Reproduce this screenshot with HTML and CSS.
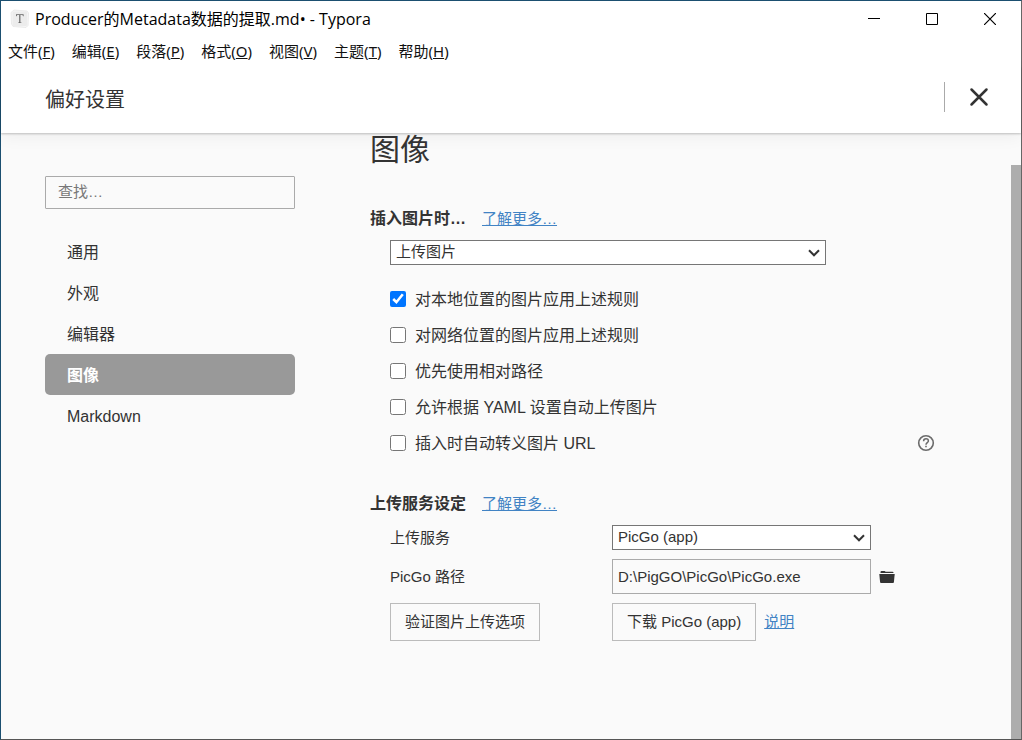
FILE: index.html
```html
<!DOCTYPE html>
<html lang="zh-CN">
<head>
<meta charset="utf-8">
<title>Typora</title>
<link rel="stylesheet" href="styles.css">
</head>
<body>
<div class="window">
  <header class="titlebar">
    <svg class="app-icon" width="20" height="20" viewBox="0 0 20 20" aria-hidden="true">
      <path d="M1 3.500 4 1l13 1 1.500 2-.500 12.500L16 18.500 3 17.500 1.500 15z" fill="#f6f6f6" stroke="#e4e4e4" stroke-width=".7"/>
      <rect x="2.500" y="2.500" width="14.500" height="14.500" rx="1" fill="#ececec"/>
      <path d="M6 7.300V5.300h7.600v2h-.5c-.2-.9-.7-1.200-1.500-1.200h-1.200v6.600c0 .6.300.8 1.100.9v.4H8.100v-.4c.8-.1 1.100-.3 1.100-.9V6.100H8c-.8 0-1.300.3-1.500 1.200z" fill="#666"/>
    </svg>
    <span class="window-title">Producer的Metadata数据的提取.md• - Typora</span>
    <div class="window-buttons">
      <button class="window-button" aria-label="最小化"><svg width="12" height="12" viewBox="0 0 12 12"><path d="M0 5.500h12" stroke="#000"/></svg></button>
      <button class="window-button" aria-label="最大化"><svg width="12" height="12" viewBox="0 0 12 12"><path d="M.5.5h11v11H.5z" fill="none" stroke="#000"/></svg></button>
      <button class="window-button" aria-label="关闭"><svg width="12" height="12" viewBox="0 0 12 12"><path d="m0 0 12 12M12 0 0 12" stroke="#000" stroke-width="1.200"/></svg></button>
    </div>
  </header>
  <nav class="menubar">
    <button class="menu">文件(<u>F</u>)</button>
    <button class="menu">编辑(<u>E</u>)</button>
    <button class="menu">段落(<u>P</u>)</button>
    <button class="menu">格式(<u>O</u>)</button>
    <button class="menu">视图(<u>V</u>)</button>
    <button class="menu">主题(<u>T</u>)</button>
    <button class="menu">帮助(<u>H</u>)</button>
  </nav>
  <div class="panel-header">
    <span class="panel-title">偏好设置</span>
    <button class="panel-close" aria-label="关闭偏好设置"><svg width="20" height="20" viewBox="0 0 20 20"><path d="m2.500 2.500 15 15M17.500 2.500l-15 15" stroke="#333" stroke-width="2.500" stroke-linecap="round"/></svg></button>
  </div>
  <div class="panel-body">
    <aside class="sidebar">
      <input class="search" type="text" placeholder="查找…" aria-label="查找">
      <nav class="sections">
        <a class="section" href="#general">通用</a>
        <a class="section" href="#appearance">外观</a>
        <a class="section" href="#editor">编辑器</a>
        <a class="section section-active" href="#image">图像</a>
        <a class="section" href="#markdown">Markdown</a>
      </nav>
    </aside>
    <main class="content">
      <h1 class="page-title">图像</h1>
      <div class="group-head">
        <h2 class="group-title" id="insert-title">插入图片时…</h2>
        <a class="link" href="#insert-help">了解更多…</a>
      </div>
      <div class="group">
        <div class="select-wrap insert-action">
          <select class="select" aria-labelledby="insert-title"><option>上传图片</option></select>
          <svg class="arrow" width="12" height="8" viewBox="0 0 12 8"><path d="m1 1.300 5 5 5-5" fill="none" stroke="#333" stroke-width="2"/></svg>
        </div>
        <div class="checks">
          <label class="check"><input class="box" type="checkbox" checked><span class="check-text">对本地位置的图片应用上述规则</span></label>
          <label class="check"><input class="box" type="checkbox"><span class="check-text">对网络位置的图片应用上述规则</span></label>
          <label class="check"><input class="box" type="checkbox"><span class="check-text">优先使用相对路径</span></label>
          <label class="check"><input class="box" type="checkbox"><span class="check-text">允许根据 YAML 设置自动上传图片</span></label>
          <div class="check-row">
            <label class="check"><input class="box" type="checkbox"><span class="check-text">插入时自动转义图片 URL</span></label>
            <button class="icon-button" aria-label="帮助">
              <svg width="18" height="18" viewBox="0 0 18 18"><circle cx="9" cy="9" r="7.300" fill="none" stroke="#6b6b6b" stroke-width="1.600"/><path d="M6.600 7.200c0-1.500 1-2.500 2.400-2.500s2.400.9 2.400 2.200c0 1.600-2.400 1.800-2.400 3.800" fill="none" stroke="#6b6b6b" stroke-width="1.500"/><path d="M8.200 11.700h1.600v1.600H8.200z" fill="#6b6b6b"/></svg>
            </button>
          </div>
        </div>
      </div>
      <div class="group-head">
        <h2 class="group-title">上传服务设定</h2>
        <a class="link" href="#upload-help">了解更多…</a>
      </div>
      <div class="group form">
        <label class="field-label" for="service">上传服务</label>
        <div class="field">
          <div class="select-wrap service">
            <select class="select" id="service"><option>PicGo (app)</option></select>
            <svg class="arrow" width="12" height="8" viewBox="0 0 12 8"><path d="m1 1.300 5 5 5-5" fill="none" stroke="#333" stroke-width="2"/></svg>
          </div>
        </div>
        <label class="field-label" for="path">PicGo 路径</label>
        <div class="field">
          <input class="path" id="path" type="text" value="D:\PigGO\PicGo\PicGo.exe">
          <button class="icon-button" aria-label="选择文件">
            <svg width="16" height="14" viewBox="0 0 16 14"><path d="M1.500 3V2q0-1 1-1h3q.700 0 1 .700h7q1 0 1 1V3z" fill="#333"/><path d="M.3 4h15.400l-.8 8.200q-.1.800-.9.800H2q-.8 0-.9-.8z" fill="#333"/></svg>
          </button>
        </div>
        <div class="field"><button class="button">验证图片上传选项</button></div>
        <div class="field"><button class="button">下载 PicGo (app)</button><a class="link" href="#manual">说明</a></div>
      </div>
    </main>
    <div class="scroll-thumb"></div>
  </div>
</div>
</body>
</html>
```

FILE: styles.css
```css
* { box-sizing: border-box; }

body {
  margin: 0;
  color: #333;
  font-family: "Liberation Sans", "Noto Sans CJK SC", sans-serif;
  font-size: 15px;
  line-height: 20px;
}

button, input, select { font: inherit; color: inherit; }
button { padding: 0; border: 0; background: none; }
svg { display: block; }

.window {
  display: flex;
  flex-direction: column;
  min-height: 100vh;
  border: 1px solid #1b4f70;
  border-right-color: #666;
  border-bottom-color: #555;
  background: #fafafa;
}

.titlebar {
  display: flex;
  align-items: center;
  height: 36px;
  padding: 0 2px 0 9px;
  background: #fff;
}
.window-title {
  margin-left: 5px;
  color: #000;
  font-family: "Open Sans", "Noto Sans CJK SC", sans-serif;
  font-size: 16px;
}
.window-buttons { display: flex; margin-left: auto; }
.window-button {
  display: grid;
  place-items: center;
  width: 58px;
  height: 36px;
}

.menubar {
  position: relative;
  z-index: 1;
  display: flex;
  gap: 17px;
  height: 29px;
  padding: 0 7px 1px;
  background: #fff;
}
.menu {
  color: #111;
  font-family: "Noto Sans", "Noto Sans CJK SC", sans-serif;
  white-space: nowrap;
}

.panel-header {
  display: flex;
  align-items: center;
  justify-content: space-between;
  height: 67px;
  padding: 0 32px 6px 44px;
  background: #fff;
  box-shadow: 0 1px 2px rgba(0, 0, 0, .22), 0 4px 16px rgba(0, 0, 0, .05);
}
.panel-title { padding-top: 6px; font-size: 20px; line-height: 30px; }
.panel-close {
  display: flex;
  align-items: center;
  height: 30px;
  padding-left: 24px;
  border-left: 1px solid #aaa;
}

.panel-body { display: flex; flex: 1; }

.sidebar { width: 294px; padding: 43px 0 0 44px; }
.search {
  display: block;
  width: 100%;
  height: 33px;
  padding: 0 12px 2px;
  border: 1px solid #aaa;
  border-radius: 1px;
  background: transparent;
}
.search::placeholder { color: #777; }
.sections { margin-top: 22px; }
.section {
  display: block;
  padding: 2px 22px 0;
  border-radius: 5px;
  color: #333;
  font-size: 16px;
  line-height: 39px;
  text-decoration: none;
}
.section-active { background: #999; color: #fff; font-weight: bold; }

.content { flex: 1; padding: 0 76px 40px 75px; }
.page-title {
  margin: 0 0 36px;
  font-size: 30px;
  font-weight: normal;
  line-height: 34px;
}
.group-head {
  display: flex;
  align-items: center;
  gap: 16px;
  height: 30px;
  padding-top: 2px;
}
.group-title { margin: 0; font-size: 16px; line-height: 28px; }
.link { color: #4183c4; text-decoration: underline; }
.group { padding: 7px 0 27px 20px; }

.select-wrap { position: relative; }
.select {
  display: block;
  width: 100%;
  height: 25px;
  padding: 0 24px 1px 5px;
  border: 1px solid #767676;
  border-radius: 0;
  background: #fff;
  appearance: none;
}
.arrow {
  position: absolute;
  top: 9px;
  right: 6px;
  pointer-events: none;
}
.insert-action { width: 80%; }
.checks { margin-top: 16px; font-size: 16px; }
.check { display: flex; align-items: center; gap: 9px; height: 36px; }
.check-text { padding-top: 2px; }
.check-row { display: flex; align-items: center; justify-content: space-between; }
.box { width: 16px; height: 16px; margin: 0; }

.form {
  display: grid;
  grid-template-columns: 222px 1fr;
  gap: 9px 0;
  align-items: center;
}
.field { display: flex; align-items: center; gap: 8px; }
.service, .path { flex: 0 1 259px; min-width: 0; }
.path {
  height: 35px;
  padding: 0 5px;
  border: 1px solid #aaa;
  background: transparent;
}
.button {
  height: 38px;
  padding: 0 14px;
  border: 1px solid #bbb;
  white-space: nowrap;
}

.scroll-thumb { width: 10px; margin-top: 32px; background: #adadad; }
```
